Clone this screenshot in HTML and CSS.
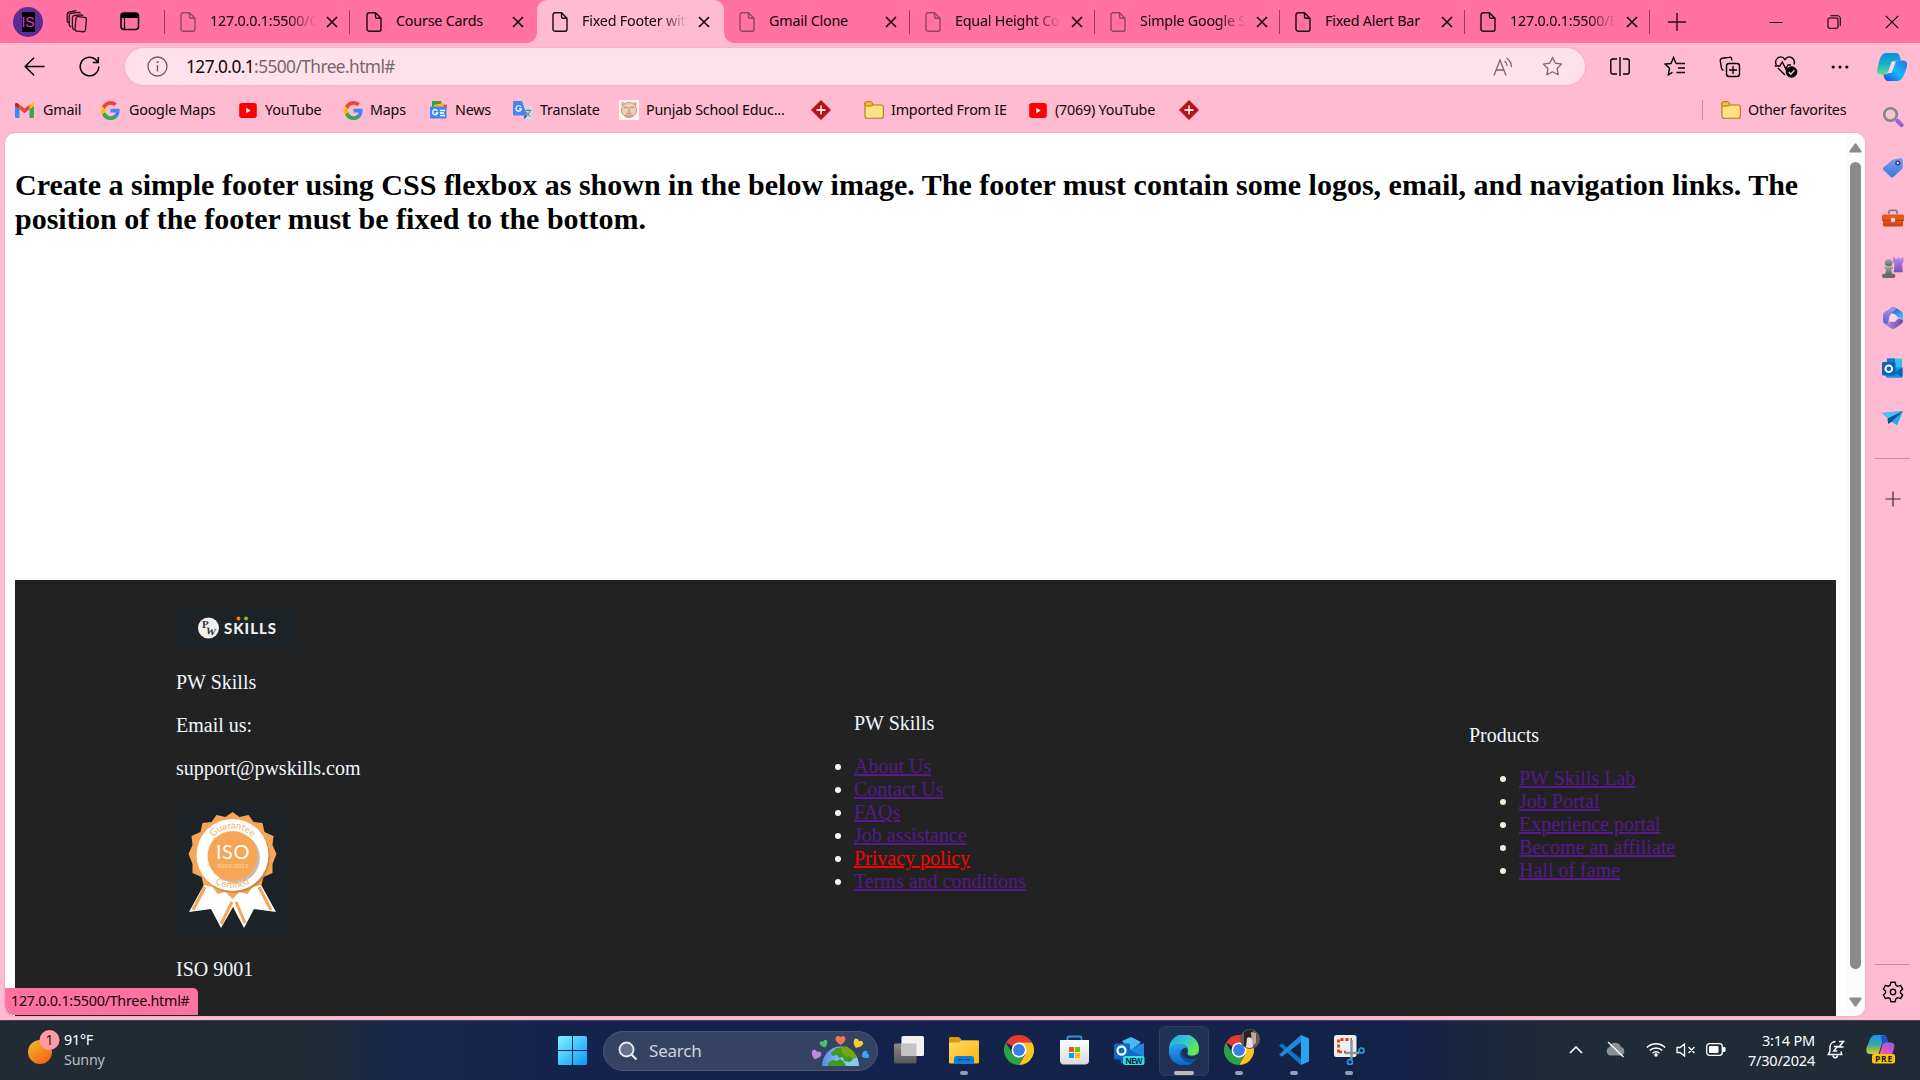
FILE: index.html
```html
<!DOCTYPE html>
<html lang="en">
<head>
<meta charset="utf-8">
<title>Fixed Footer with Flexbox</title>
<link rel="stylesheet" href="styles.css">
</head>
<body>
<svg class="defs" width="0" height="0">
  <defs>
    <linearGradient id="gWin" x1="0" y1="0" x2="1" y2="1"><stop offset="0" stop-color="#7df3ff"/><stop offset="1" stop-color="#0a96ff"/></linearGradient>
    <linearGradient id="gSun" x1="0" y1="0" x2=".7" y2="1"><stop offset="0" stop-color="#f2bd34"/><stop offset="1" stop-color="#f4650f"/></linearGradient>
    <linearGradient id="gCpA" x1="0" y1="0" x2="0" y2="1"><stop offset="0" stop-color="#0d8fe0"/><stop offset=".5" stop-color="#12b0cc"/><stop offset="1" stop-color="#63dc92"/></linearGradient>
    <linearGradient id="gCpB" x1="0" y1="1" x2="1" y2="0"><stop offset="0" stop-color="#0b4fe0"/><stop offset=".5" stop-color="#18b6fb"/><stop offset="1" stop-color="#2b6fe8"/></linearGradient>
    <linearGradient id="gPreA" x1="0" y1="0" x2="0" y2="1"><stop offset="0" stop-color="#1a8ff0"/><stop offset=".5" stop-color="#35a9a0"/><stop offset="1" stop-color="#e2c928"/></linearGradient>
    <linearGradient id="gPreB" x1="1" y1="0" x2="0" y2="1"><stop offset="0" stop-color="#8b5cf2"/><stop offset=".6" stop-color="#e256b5"/><stop offset="1" stop-color="#ff8a60"/></linearGradient>
    <linearGradient id="gTag" x1="0" y1="0" x2="0" y2="1"><stop offset="0" stop-color="#6f9ff0"/><stop offset="1" stop-color="#3f78d8"/></linearGradient>
    <linearGradient id="gBox" x1="0" y1="0" x2="0" y2="1"><stop offset="0" stop-color="#f0662a"/><stop offset="1" stop-color="#c8400c"/></linearGradient>
    <linearGradient id="gRook" x1="0" y1="0" x2="0" y2="1"><stop offset="0" stop-color="#b98af0"/><stop offset="1" stop-color="#7a52b8"/></linearGradient>
    <linearGradient id="gPawn" x1="0" y1="0" x2="0" y2="1"><stop offset="0" stop-color="#aaa"/><stop offset="1" stop-color="#666"/></linearGradient>
    <linearGradient id="gM1" x1="0" y1="0" x2="1" y2="1"><stop offset="0" stop-color="#2340b8"/><stop offset="1" stop-color="#4ad0ff"/></linearGradient>
    <linearGradient id="gM2" x1="0" y1="0" x2="0" y2="1"><stop offset="0" stop-color="#b890e8"/><stop offset="1" stop-color="#3a62dc"/></linearGradient>
    <linearGradient id="gM3" x1="0" y1="0" x2="1" y2="0"><stop offset="0" stop-color="#b98ad8"/><stop offset="1" stop-color="#6c49ac"/></linearGradient>
    <linearGradient id="gFold" x1="0" y1="0" x2="1" y2="1"><stop offset="0" stop-color="#ffd968"/><stop offset="1" stop-color="#fbb60f"/></linearGradient>
    <linearGradient id="gEdgeT" x1="0" y1="0" x2="1" y2=".5"><stop offset="0" stop-color="#1fa9e6"/><stop offset=".6" stop-color="#35c9c9"/><stop offset="1" stop-color="#66eb4c"/></linearGradient>
    <linearGradient id="gEdgeB" x1="0" y1="0" x2="0" y2="1"><stop offset="0" stop-color="#2aa5ea"/><stop offset="1" stop-color="#0b62c4"/></linearGradient>
    <linearGradient id="gStore" x1="0" y1="0" x2="0" y2="1"><stop offset="0" stop-color="#fff"/><stop offset="1" stop-color="#d9dade"/></linearGradient>
    <linearGradient id="gTv" x1="0" y1="0" x2="0" y2="1"><stop offset="0" stop-color="#8a8a8a"/><stop offset="1" stop-color="#555"/></linearGradient>
    <linearGradient id="gEarth" x1="0" y1="0" x2="1" y2="0"><stop offset="0" stop-color="#5b86e8"/><stop offset=".5" stop-color="#7cc5ff"/><stop offset="1" stop-color="#8cc8f5"/></linearGradient>
    <symbol id="page" viewBox="0 0 16 20"><path d="M3 .8h6.500L15 6.300v10.900a2 2 0 0 1-2 2H3a2 2 0 0 1-2-2V2.800a2 2 0 0 1 2-2zM9.500.8v4a1.500 1.500 0 0 0 1.500 1.500h4" fill="none" stroke="currentColor" stroke-width="1.400"/></symbol>
    <symbol id="x" viewBox="0 0 12 12"><path d="M1 1l10 10M11 1L1 11" fill="none" stroke="currentColor" stroke-width="1.600"/></symbol>
    <symbol id="google" viewBox="0 0 18 18"><path d="M17.600 9.200c0-.6-.05-1.200-.16-1.800H9v3.500h4.800a4.100 4.100 0 0 1-1.800 2.700v2.300h2.900c1.700-1.600 2.700-3.900 2.700-6.700z" fill="#4285f4"/><path d="M9 18c2.400 0 4.500-.8 6-2.200l-2.900-2.300a5.400 5.400 0 0 1-8.100-2.800H1v2.300A9 9 0 0 0 9 18z" fill="#34a853"/><path d="M4 10.700a5.400 5.400 0 0 1 0-3.400V5H1a9 9 0 0 0 0 8z" fill="#fbbc05"/><path d="M9 3.600c1.300 0 2.500.5 3.400 1.300L15 2.300A9 9 0 0 0 1 5l3 2.300A5.400 5.400 0 0 1 9 3.600z" fill="#ea4335"/></symbol>
    <symbol id="yt" viewBox="0 0 20 17"><rect width="20" height="17" rx="3" fill="#f00"/><path d="M8 5.500v6l5-3z" fill="#fff"/></symbol>
    <symbol id="diamond" viewBox="0 0 20 20"><path d="M10 .5L19.500 10 10 19.500.5 10z" fill="#b90f17" stroke="#b90f17" stroke-linejoin="round"/><path d="M10 5.500v9M5.500 10h9" stroke="#ffdada" stroke-width="1.800"/></symbol>
    <symbol id="folder" viewBox="0 0 20 18"><path d="M1 4h16.500A1.800 1.800 0 0 1 19.300 5.800v9.500a2 2 0 0 1-2 2H3a2 2 0 0 1-2-2z" fill="#ffe085" stroke="#a87a14" stroke-width="1.100"/><path d="M.7 3.500V2.200A1.500 1.500 0 0 1 2.200.7h5L9 3 7.500 5H1.500z" fill="#f3c31d" stroke="#a87a14"/></symbol>
    <symbol id="chrome" viewBox="0 0 30 30"><path d="M15 15L2 7.500A15 15 0 0 1 28 7.500L15 8z" fill="#e33b2e"/><path d="M15 7.500h13A15 15 0 0 1 15 30l6.500-11.200z" fill="#fcc31e"/><path d="M2 7.500A15 15 0 0 0 15 30l6.500-11.200H8.500z" fill="#2da04a"/><circle cx="15" cy="15" r="7.500" fill="#fff"/><circle cx="15" cy="15" r="5.900" fill="#3a7cec"/></symbol>
    <symbol id="heart" viewBox="0 0 10 9"><path d="M5 9C2 7 0 5 0 2.700 0 0 3.600-1 5 1.600 6.400-1 10 0 10 2.700 10 5 8 7 5 9z" fill="currentColor"/></symbol>
  </defs>
</svg>

<div class="window">
  <div class="titlebar">
    <div class="title-tools">
      <span class="avatar"><span class="avatar-text">IS</span></span>
      <svg class="ws" width="22" height="25" viewBox="0 0 22 25"><g fill="none" stroke="#2b1019" stroke-width="1.300"><rect x="9.500" y="8" width="10.500" height="14.500" rx="2" transform="rotate(5 15 15)"/><path d="M8.500 21l-1.200-.8a2 2 0 0 1-.9-2V8.500a2 2 0 0 1 2-2l7-.6a2 2 0 0 1 1.600 1.200M5 18l-1-.8a2 2 0 0 1-.8-2V6.500a2 2 0 0 1 1.500-2.100l8-1.100a1.800 1.800 0 0 1 1.700 1.200M2.500 14l-.7-.7a2 2 0 0 1-.6-1.500V6a3 3 0 0 1 2.200-3l7-1.400"/></g></svg>
      <svg class="va" width="20" height="19" viewBox="0 0 20 19"><rect x="1" y="1" width="17.500" height="16.500" rx="3" fill="none" stroke="#000" stroke-width="1.500"/><path d="M1 6V3.500A2.500 2.500 0 0 1 3.500 1h12.500A2.500 2.500 0 0 1 18.500 3.500V6z"/><path d="M4.500 6v11" stroke="#000" stroke-width="1.200"/></svg>
    </div>
    <div class="tabs">
      <div class="tab dim"><svg class="pg"><use href="#page"/></svg><span class="tt">127.0.0.1:5500/One.html</span><svg class="cx"><use href="#x"/></svg></div>
      <div class="tab second"><svg class="pg"><use href="#page"/></svg><span class="tt full">Course Cards</span><svg class="cx"><use href="#x"/></svg></div>
      <div class="tab active"><svg class="pg"><use href="#page"/></svg><span class="tt">Fixed Footer with Flexbox</span><svg class="cx"><use href="#x"/></svg></div>
      <div class="tab dim plain"><svg class="pg"><use href="#page"/></svg><span class="tt full">Gmail Clone</span><svg class="cx"><use href="#x"/></svg></div>
      <div class="tab dim"><svg class="pg"><use href="#page"/></svg><span class="tt">Equal Height Columns</span><svg class="cx"><use href="#x"/></svg></div>
      <div class="tab dim"><svg class="pg"><use href="#page"/></svg><span class="tt">Simple Google Search</span><svg class="cx"><use href="#x"/></svg></div>
      <div class="tab"><svg class="pg"><use href="#page"/></svg><span class="tt full">Fixed Alert Bar</span><svg class="cx"><use href="#x"/></svg></div>
      <div class="tab last"><svg class="pg"><use href="#page"/></svg><span class="tt">127.0.0.1:5500/Eight.html</span><svg class="cx"><use href="#x"/></svg></div>
    </div>
    <svg class="newtab" width="18" height="18" viewBox="0 0 18 18"><path d="M9 0v18M0 9h18" stroke="#2a0d18" stroke-width="1.400"/></svg>
    <div class="winctl">
      <svg width="14" height="14" viewBox="0 0 14 14"><path d="M.5 7.500h13" stroke="#000" stroke-width="1"/></svg>
      <svg width="14" height="14" viewBox="0 0 14 14"><g fill="none" stroke="#000" stroke-width="1.100"><rect x="1" y="3" width="10" height="10.300" rx="1.500"/><path d="M3.500.8H10.500a2.800 2.800 0 0 1 2.800 2.800V11"/></g></svg>
      <svg width="14" height="14" viewBox="0 0 14 14"><path d="M.8.8l12.400 12.400M13.200.8L.8 13.200" stroke="#000" stroke-width="1.100"/></svg>
    </div>
  </div>

  <div class="toolbar">
    <svg class="back" width="21" height="19" viewBox="0 0 21 19"><path d="M10 .8L1.200 9.500 10 18.200M1.200 9.500H20.500" fill="none" stroke="#000" stroke-width="1.500"/></svg>
    <svg class="reload" width="21" height="21" viewBox="0 0 21 21"><path d="M19.800 10.500A9.300 9.300 0 1 1 16.500 3.400L19 6M19.300 1v5.500h-5.500" fill="none" stroke="#000" stroke-width="1.500"/></svg>
    <div class="address">
      <svg class="info" width="21" height="21" viewBox="0 0 21 21"><circle cx="10.500" cy="10.500" r="9.500" fill="none" stroke="#6c5f64" stroke-width="1.300"/><path d="M10.500 9v6.500" stroke="#6c5f64" stroke-width="1.400"/><circle cx="10.500" cy="6" r="1.100" fill="#6c5f64"/></svg>
      <span class="url"><b>127.0.0.1</b>:5500/Three.html#</span>
      <svg class="read" width="20" height="20" viewBox="0 0 20 20"><path d="M1 18.500L7 3l6 15.500M3.200 13h7.600M11.500 4q2.500 2 2.500 5M13.500 1q5 3.500 5 9" fill="none" stroke="#77666c" stroke-width="1.300"/></svg>
      <svg class="star" width="21" height="21" viewBox="0 0 21 21"><path d="M10.500 1.500l2.800 5.700 6.300.9-4.500 4.400 1 6.300-5.600-3-5.600 3 1-6.300L1.400 8.100l6.300-.9z" fill="none" stroke="#77666c" stroke-width="1.300" stroke-linejoin="round"/></svg>
    </div>
    <div class="tool-icons">
      <svg width="22" height="22" viewBox="0 0 22 22"><path d="M8 3H3.500A1.700 1.700 0 0 0 1.800 4.700v11.600A1.700 1.700 0 0 0 3.500 18H8M14 3h4.500a1.700 1.700 0 0 1 1.700 1.700v11.600a1.700 1.700 0 0 1-1.700 1.700H14M11 1v19" fill="none" stroke="#000" stroke-width="1.400"/></svg>
      <svg width="22" height="22" viewBox="0 0 22 22"><path d="M12 7.500L9.500 1.500 7 7.500l-5.800.6 4.300 4.200-1.200 6.500 4.200-2.500M12 7.500h9M14 12h7M12.500 16.500H21" fill="none" stroke="#000" stroke-width="1.400"/></svg>
      <svg width="22" height="22" viewBox="0 0 22 22"><path d="M4.500 14.500L3.500 13.800a2.500 2.500 0 0 1-1-1.500L1.300 5a2.300 2.300 0 0 1 2-2.700L10 1.200a2.300 2.300 0 0 1 2.700 1.800l.3 1.500" fill="none" stroke="#000" stroke-width="1.400"/><rect x="7.500" y="7.500" width="13" height="13" rx="2.500" fill="none" stroke="#000" stroke-width="1.400"/><path d="M14 10v8M10 14h8" stroke="#000" stroke-width="1.300"/></svg>
      <svg width="24" height="24" viewBox="0 0 24 24"><path d="M2.300 10C-.5 3.500 7-1 11 4.500 15-1 22 3.500 20 9.500M4 13l7 7M.8 11h5l2.500-4 3.500 7 2.200-4H17" fill="none" stroke="#000" stroke-width="1.400"/><circle cx="17.500" cy="17" r="5.800"/><path d="M14.800 17l2 2.200 3.700-4" fill="none" stroke="#fbd" stroke-width="1.500"/></svg>
      <svg width="18" height="6" viewBox="0 0 18 6"><circle cx="2.200" cy="3" r="1.600"/><circle cx="9" cy="3" r="1.600"/><circle cx="15.800" cy="3" r="1.600"/></svg>
    </div>
    <svg class="copilot" width="30" height="28" viewBox="0 0 30 28"><path d="M19 0q3 0 4 4l1 3.500h-5q-3 0-4 3l-3 9q-1 2-4 2H3Q0 21.500 0 17l2.500-10Q4.500 0 9 0z" fill="url(#gCpA)"/><path d="M11 28q-3-.3-4-4l-.8-2.500H8q3 0 4-2.500l3.500-8.500q1-3 4-3h6.500Q31.500 8 29.800 14l-2.500 7Q25 28 20 28z" fill="url(#gCpB)"/><path d="M14.500 8.500h4.500l-4.500 11.500h-5q1.500-.5 2.200-2.500z" fill="#ffd3e2"/></svg>
  </div>

  <div class="middle">
    <div class="main">
      <div class="bookmarks">
        <div class="bm wide"><svg width="19" height="15" viewBox="0 0 19 15"><path d="M0 3v10.500A1.300 1.300 0 0 0 1.300 15H4.500V6z" fill="#4285f4"/><path d="M19 3v10.500a1.300 1.300 0 0 1-1.300 1.500h-3.200V6z" fill="#34a853"/><path d="M19 3V1.500C19 0 17.300-.3 16.300.5l-1.800 1.300v4.500L19 3z" fill="#fbbc04"/><path d="M0 3V1.500C0 0 1.700-.3 2.700.5l1.800 1.300v4.500z" fill="#c5221f"/><path d="M4.500 1.800l5 3.700 5-3.700v4.500l-5 3.900-5-3.900z" fill="#ea4335"/></svg><span>Gmail</span></div>
        <div class="bm wide"><svg width="19" height="19"><use href="#google"/></svg><span>Google Maps</span></div>
        <div class="bm"><svg width="20" height="15"><use href="#yt"/></svg><span>YouTube</span></div>
        <div class="bm"><svg width="19" height="19"><use href="#google"/></svg><span>Maps</span></div>
        <div class="bm"><svg width="19" height="18" viewBox="0 0 19 18"><path d="M3 0h9l2 6H3z" fill="#2ca24c"/><path d="M8 2l10 2-1.500 8H8z" fill="#e8412f"/><path d="M5 4l9-2 2 6H5z" fill="#fbbc04"/><rect x="1" y="5.500" width="16.500" height="12" rx="1" fill="#4285f4"/><path d="M8.500 9.800a2.600 2.600 0 1 0 .2 2.200H6.500M11 9.500h5M11 12h4M11 14.500h5" fill="none" stroke="#fff" stroke-width="1.300"/></svg><span>News</span></div>
        <div class="bm"><svg width="20" height="19" viewBox="0 0 20 19"><path d="M9 5h9.500A1.200 1.200 0 0 1 19.700 6.200v11a1.200 1.200 0 0 1-1.200 1.300H12z" fill="#d5dbe3"/><path d="M12 9.500h6.500M15 8v1.500m2 0q-.8 4-4 6m.3-4.500q1.500 3 4.200 4.500" stroke="#607d8b" fill="none"/><path d="M1.200 0H9l5 14.500H1.200A1.200 1.200 0 0 1 0 13.300V1.200A1.200 1.200 0 0 1 1.200 0z" fill="#4285f4"/><path d="M11 14.500h3l-2.500 4z" fill="#1a56c4"/><path d="M8 6a2.700 2.700 0 1 0 .4 1.900H6" fill="none" stroke="#fff" stroke-width="1.200"/></svg><span>Translate</span></div>
        <div class="bm"><svg width="20" height="20" viewBox="0 0 20 20"><rect width="20" height="20" fill="#fff6ee"/><circle cx="10" cy="10" r="7.500" fill="#f0cdba" stroke="#c99680"/><circle cx="4" cy="4" r="2" fill="#dcae98"/><circle cx="16" cy="4" r="2" fill="#dcae98"/><path d="M5 8q2-2 4 0M11 8q2-2 4 0M7.500 13q2.500 2.500 5 0M10 8v5M6 15q4 3 8 0" fill="none" stroke="#b07a64" stroke-width=".9"/></svg><span>Punjab School Educ...</span></div>
        <div class="bm"><svg width="20" height="20"><use href="#diamond"/></svg></div>
        <div class="bm"><svg width="20" height="18"><use href="#folder"/></svg><span>Imported From IE</span></div>
        <div class="bm"><svg width="20" height="15"><use href="#yt"/></svg><span>(7069) YouTube</span></div>
        <div class="bm"><svg width="20" height="20"><use href="#diamond"/></svg></div>
        <div class="bm other"><svg width="20" height="18"><use href="#folder"/></svg><span>Other favorites</span></div>
      </div>

      <div class="viewport">
        <div class="page">
          <h2>Create a simple footer using CSS flexbox as shown in the below image. The footer must contain some logos, email, and navigation links. The<br>position of the footer must be fixed to the bottom.</h2>
          <footer class="footer">
            <div class="col brand">
              <svg class="logo" width="120" height="46" viewBox="0 0 120 46"><rect width="120" height="46" fill="#1c2226"/><circle cx="32.500" cy="23" r="10.500" fill="#f2f2f2"/><text x="26" y="22.500" class="lg-p">P</text><text x="30" y="29" class="lg-w" transform="rotate(14 32 26)">W</text><text x="48" y="28.500" class="lg-s" textLength="53" lengthAdjust="spacingAndGlyphs">SKILLS</text><circle cx="62.500" cy="13.500" r="1.900" fill="#ee7f1d"/><circle cx="70" cy="13.500" r="1.900" fill="#86c440"/></svg>
              <p>PW Skills</p>
              <p>Email us:</p>
              <p>support@pwskills.com</p>
              <svg class="iso" width="114" height="135" viewBox="0 0 114 135">
                <defs><path id="arcT" d="M30 52a26.500 26.500 0 0 1 53 0"/><path id="arcB" d="M23.500 52a33 33 0 0 0 66 0"/></defs>
                <rect width="114" height="135" fill="#1c2226"/>
                <path d="M30 78L13 109l22-3 10 19 12-21 11 21 10-19 22 3-17-31z" fill="#fff"/>
                <path d="M29 84L17 107M83 84l12 23M56 99L45 121M60 99l9 21" stroke="#f6a655" stroke-width="3"/>
                <path d="M56.500 9l7 5 9-2 5 7 9 1 2 9 9 4-1 9 4 9-4 10 0 9-9 4-2 8-9 2-5 7-8-2-7 7-7-7-8 2-5-7-9-2-2-8-9-4 0-9-4-10 4-9-1-9 9-4 2-9 9-1 5-7 9 2z" fill="#f6a655"/>
                <circle cx="58" cy="54" r="36" fill="#ba7a3c" opacity=".65"/>
                <circle cx="56.500" cy="52" r="36" fill="#fff"/>
                <circle cx="59" cy="55" r="25" fill="#c5bdb5"/>
                <circle cx="56.500" cy="53" r="25" fill="#f6a655"/>
                <text class="iso-a"><textPath href="#arcT" startOffset="50%" text-anchor="middle">Guarantee</textPath></text>
                <text class="iso-a"><textPath href="#arcB" startOffset="50%" text-anchor="middle">Certified</textPath></text>
                <text x="57" y="56" class="iso-t" text-anchor="middle">ISO</text>
                <text x="57" y="64.500" class="iso-n" text-anchor="middle">9001:2015</text>
              </svg>
              <p>ISO 9001</p>
            </div>
            <div class="col links">
              <p>PW Skills</p>
              <ul>
                <li><a href="#">About Us</a></li>
                <li><a href="#">Contact Us</a></li>
                <li><a href="#">FAQs</a></li>
                <li><a href="#">Job assistance</a></li>
                <li><a href="#" class="hot">Privacy policy</a></li>
                <li><a href="#">Terms and conditions</a></li>
              </ul>
            </div>
            <div class="col products">
              <p>Products</p>
              <ul>
                <li><a href="#">PW Skills Lab</a></li>
                <li><a href="#">Job Portal</a></li>
                <li><a href="#">Experience portal</a></li>
                <li><a href="#">Become an affiliate</a></li>
                <li><a href="#">Hall of fame</a></li>
              </ul>
            </div>
          </footer>
        </div>
        <div class="scroll">
          <svg width="13" height="10" viewBox="0 0 13 10"><path d="M5.500 1q1-1.500 2 0l5 7q.5 1.500-1 1.500h-10Q0 9.500.5 8z" fill="#8b8b8b"/></svg>
          <div class="thumb"></div>
          <svg width="13" height="10" viewBox="0 0 13 10"><path d="M5.500 9q1 1.500 2 0l5-7Q13 .5 11.500.5h-10Q0 .5.500 2z" fill="#8b8b8b"/></svg>
        </div>
        <div class="status">127.0.0.1:5500/Three.html#</div>
      </div>
    </div>

    <div class="sidebar">
      <svg width="22" height="22" viewBox="0 0 22 22"><circle cx="8.500" cy="8.500" r="6.300" fill="#f6c6d6" stroke="#858585" stroke-width="2.600"/><path d="M15.500 15l4 4" stroke="#9467d8" stroke-width="4.200" stroke-linecap="round"/></svg>
      <svg class="tag" width="22" height="22" viewBox="0 0 22 22"><path d="M11 2.500l7.500-1.300a2 2 0 0 1 2.300 2V10a3 3 0 0 1-.8 2L11.500 20a2 2 0 0 1-2.800 0L1.500 13a2 2 0 0 1 0-2.800z" fill="url(#gTag)"/><circle cx="15.800" cy="6" r="1.900" fill="#f5c3dc" stroke="#34379b" stroke-width="1.400"/></svg>
      <svg width="22" height="22" viewBox="0 0 22 22"><path d="M7 7V4.500A1.200 1.200 0 0 1 8.200 3.300h5.600A1.200 1.200 0 0 1 15 4.500V7" fill="none" stroke="#7e7e7e" stroke-width="1.700"/><rect x="1" y="9" width="20" height="10.500" rx="1.500" fill="url(#gBox)"/><rect y="7.500" width="22" height="6.500" rx="1.500" fill="#e8571d"/><path d="M0 12.800h22v1H0z" fill="#ae3508"/><circle cx="11" cy="13" r="2.300" fill="#dcdcdc"/></svg>
      <svg width="23" height="23" viewBox="0 0 23 23"><path d="M12 .5h2.500V2h2V.5h2.500V2h1.500V.5H23v5l-1.500 1.500.8 9H12.800l.8-9L12 5.500z" fill="url(#gRook)"/><circle cx="7.500" cy="6" r="4" fill="url(#gPawn)"/><path d="M3 10h9v2.200l-1.700.8.7 5H4l.7-5L3 12.200z" fill="url(#gPawn)"/><rect x=".5" y="17.500" width="14" height="4.500" rx="2.200" fill="#696969"/></svg>
      <svg width="22" height="22" viewBox="0 0 22 22"><path d="M8.500 1.200Q11-.5 14 1l5 3q2 1.200 2 3.500V13l-6-3.500Q14.500 7.500 12 7L6.500 4.500z" fill="url(#gM1)"/><path d="M9.500.8L3 4.800Q1 6 1 8.300v5.200Q1 15.800 3 17l3.500 2Q6 12 8 8.500q1.500-3 5-5L14 .8Q11-.5 9.500.8z" fill="url(#gM2)"/><path d="M3 16.500q3 .5 6-2l3.500.5 4.500-3.500 4 1.500v1q0 2-2 3.200L13 21.200q-2 1-4 0L4 18z" fill="url(#gM3)"/><circle cx="11" cy="11" r="3.700" fill="#ffd9e6"/></svg>
      <svg width="21" height="21" viewBox="0 0 21 21"><rect x="5" y="1" width="15" height="12" rx="1" fill="#33bdf2"/><path d="M5 1h8v6H5z" fill="#0d7cd5"/><path d="M4 10h16.500v9a1.200 1.200 0 0 1-1.200 1.200H5.200A1.200 1.200 0 0 1 4 19z" fill="#1591dd"/><path d="M12 15l8.500-5v9.500z" fill="#0764b5"/><rect y="4.500" width="13.500" height="13.500" rx="1.500" fill="#0a63b9"/><circle cx="6.800" cy="11.200" r="3.300" fill="none" stroke="#fff" stroke-width="2"/></svg>
      <svg width="22" height="22" viewBox="0 0 22 22"><path d="M0 6l21-2-6 14.500-5-3.500z" fill="#28a9ea"/><path d="M0 6l21-2L7 12z" fill="#41c4f5"/><path d="M21 4L5.500 11.500l.7 5.500 3.500-2.200z" fill="#0c4f94"/></svg>
      <i class="rule top"></i>
      <svg class="plus" width="16" height="16" viewBox="0 0 16 16"><path d="M8 .5v15M.5 8h15" stroke="#3b2a30" stroke-width="1.200"/></svg>
      <i class="rule bottom"></i>
      <svg class="gear" width="22" height="22" viewBox="0 0 22 22"><path d="M8.800 1.300h4.400l.6 2.900 1.900 1.100 2.800-1 2.200 3.800-2.200 2v1.800l2.200 2-2.200 3.800-2.800-1-1.900 1.100-.6 2.900H8.800l-.6-2.900-1.900-1.100-2.800 1-2.200-3.800 2.200-2v-1.800l-2.200-2 2.200-3.800 2.800 1 1.900-1.100z" fill="none" stroke="#000" stroke-width="1.400" stroke-linejoin="round"/><circle cx="11" cy="11" r="2.700" fill="none" stroke="#000" stroke-width="1.400"/></svg>
    </div>
  </div>
</div>

<div class="taskbar">
  <div class="weather">
    <svg width="34" height="38" viewBox="0 0 34 38"><circle cx="13" cy="23" r="12" fill="url(#gSun)"/><circle cx="22.500" cy="11" r="10" fill="#ff9aa5"/><text x="22.500" y="16" text-anchor="middle" class="badge-n">1</text></svg>
    <div class="wtext"><span>91°F</span><span class="muted">Sunny</span></div>
  </div>
  <svg class="win" width="29" height="29" viewBox="0 0 29 29"><path d="M0 1.500A1.500 1.500 0 0 1 1.500 0H14v14H0zM15 0h12.500A1.500 1.500 0 0 1 29 1.500V14H15zM0 15h14v14H1.500A1.500 1.500 0 0 1 0 27.500zM15 15h14v12.500a1.500 1.500 0 0 1-1.500 1.500H15z" fill="url(#gWin)"/></svg>
  <div class="search">
    <svg width="20" height="20" viewBox="0 0 20 20"><circle cx="8.500" cy="8.500" r="7" fill="#65718c" stroke="#e8eaf0" stroke-width="1.800"/><path d="M13.500 13.500l5 5" stroke="#e8eaf0" stroke-width="2.200"/></svg>
    <span>Search</span>
    <svg class="earth" width="58" height="32" viewBox="0 0 58 32">
      <path d="M11 31a18.500 19.500 0 0 1 37 0z" fill="url(#gEarth)"/>
      <path d="M17 31v-3l4-3 5 1 3-2 4 3 2 4zM20 18l5-5 10-1.500L42 16l4 6-4 2-3 3-6-1-1-4-4 1-2-3-5 1z" fill="#3f9a22"/>
      <path d="M30 12l6-.5 6 4.500 4 6-4 2-4-3-3 1-4-4z" fill="#7ba510"/>
      <use href="#heart" x="24" y="1" width="11" height="9" color="#f9725a"/>
      <use href="#heart" x="9" y="5" width="8" height="8" color="#43c768" transform="rotate(-20 13 9)"/>
      <use href="#heart" x="42" y="4" width="10" height="9" color="#fbc935" transform="rotate(25 46 8)"/>
      <use href="#heart" x="0" y="15" width="10" height="10" color="#bd8ae6" transform="rotate(20 5 20)"/>
      <use href="#heart" x="50" y="16" width="8" height="8" color="#36a9ef" transform="rotate(60 54 20)"/>
    </svg>
  </div>
  <div class="apps">
    <div class="app"><svg width="30" height="28" viewBox="0 0 30 28"><rect x="0" y="7.500" width="22.500" height="20" rx="1.500" fill="url(#gTv)"/><rect x="7.500" width="22.500" height="20" rx="1.500" fill="#f2f2f2"/><path d="M7.500 7.500h15V20h-15z" fill="#c3c3c3"/></svg></div>
    <div class="app run"><svg width="30" height="27" viewBox="0 0 30 27"><path d="M0 1.500A1.500 1.500 0 0 1 1.500 0H10l3 3.500h15.500A1.500 1.500 0 0 1 30 5v8H0z" fill="#dc9a0a"/><path d="M0 5.500h10l2.500-2H30V25a1.500 1.500 0 0 1-1.500 1.500h-27A1.500 1.500 0 0 1 0 25z" fill="url(#gFold)"/><path d="M5 27v-5.500a2.500 2.500 0 0 1 2.500-2.500h15a2.500 2.500 0 0 1 2.500 2.500V27z" fill="#0f7fd3"/><path d="M8.500 22.700h13" stroke="#0b4a91" stroke-width="1.300"/></svg></div>
    <div class="app"><svg width="30" height="30"><use href="#chrome"/></svg></div>
    <div class="app"><svg width="29" height="30" viewBox="0 0 29 30"><path d="M7.500 6V3a1.500 1.500 0 0 1 1.500-1.500h11A1.500 1.500 0 0 1 21.500 3v3" fill="none" stroke="#1d9fe2" stroke-width="1.800"/><path d="M0 5h29v20.500a4 4 0 0 1-4 4H4a4 4 0 0 1-4-4z" fill="url(#gStore)"/><path d="M9 12h5v5H9z" fill="#f25022"/><path d="M15 12h5v5h-5z" fill="#7fba00"/><path d="M9 18h5v5H9z" fill="#00a4ef"/><path d="M15 18h5v5h-5z" fill="#ffb900"/></svg></div>
    <div class="app"><svg width="31" height="30" viewBox="0 0 31 30"><path d="M5 11L17 3l13 8v12l-13 5H7z" fill="#1368c8"/><path d="M8 6l9-4 10 5-10 8z" fill="#49b7f2"/><path d="M16 15l14-7v14z" fill="#2387de"/><rect y="8.500" width="16" height="16" rx="1.500" fill="#0b68c7"/><circle cx="7.500" cy="15.500" r="4" fill="none" stroke="#fff" stroke-width="2.300"/><rect x="9" y="21" width="21.500" height="9" rx="2" fill="#35dfe9"/><text x="19.800" y="28.600" class="new" text-anchor="middle" textLength="17">NEW</text></svg></div>
    <div class="app run current"><svg width="30" height="30" viewBox="0 0 30 30"><circle cx="15" cy="15" r="15" fill="#0b5fb8"/><path d="M0 14A15 15 0 0 1 30 14q0 6-6.500 6.500-5.500 0-5-2.500 1-1.500.5-4-1-4-7-4.500Q5 9.500 0 14z" fill="url(#gEdgeT)"/><path d="M0 14q3-5.500 10-5 6.500.5 8.500 5.500-5-2.500-7 1.500-2 6 4 9.500 3.500 2 8 2.500A15 15 0 0 1 0 14z" fill="url(#gEdgeB)"/><path d="M17.500 13q-4-.5-5 3.500 0 5.500 6 7.500 5 1.200 9.500-1l2.500-3.500h-2.500q-3 2.300-7 1.800-3.600-.5-2.500-3 .5-2-1-5.300z" fill="#1f2d55"/><path d="M11.500 16q-1.500 6 5 10.500 4 1.500 7.500.5 3-1.500 5-4.500-8 3.500-14-1-3-2.500-3.500-5.500z" fill="#124d97"/></svg></div>
    <div class="app run"><svg class="profiled" width="36" height="36" viewBox="0 0 36 36"><use href="#chrome" x="0" y="6" width="30" height="30"/><circle cx="26" cy="10" r="10" fill="#6a5752"/><path d="M20 3q4-3 9-2l-3 17-6-1z" fill="#2b2220"/><path d="M27 3l5 1v10l-4 3z" fill="#b9a9a4"/><path d="M23 9q3-2 5 1l1 8q-4 2-7 0z" fill="#ecdcd8"/></svg></div>
    <div class="app run"><svg width="30" height="30" viewBox="0 0 30 30"><path d="M0 10.500l3-2.300L22 24v6z" fill="#0e76c0"/><path d="M0 19.500l3 2.300L22 7V0z" fill="#1c8ad6"/><path d="M22 0l8 3.500v23L22 30z" fill="#2ba3ee"/></svg></div>
    <div class="app run"><svg width="31" height="30" viewBox="0 0 31 30"><rect width="22.500" height="22" rx="2.500" fill="#eceef1"/><path d="M4.500 17.500v-13h13.500" fill="none" stroke="#d8420c" stroke-width="2.800" stroke-dasharray="3 2"/><path d="M5 17h7" stroke="#d8420c" stroke-width="2.600" stroke-dasharray="3 2"/><path d="M17.500 5v19M11 18h14" stroke="#8d939a" stroke-width="2.400"/><circle cx="27.500" cy="15.500" r="2.500" fill="none" stroke="#2b9be2" stroke-width="1.700"/><circle cx="16" cy="27" r="2.500" fill="none" stroke="#2b9be2" stroke-width="1.700"/></svg></div>
  </div>
  <div class="tray">
    <svg class="chev" width="14" height="8" viewBox="0 0 14 8"><path d="M1 7l6-6 6 6" fill="none" stroke="#fff" stroke-width="1.700"/></svg>
    <svg class="cloud" width="21" height="17" viewBox="0 0 21 17"><path d="M5 14.500a4.500 4.500 0 0 1-.5-8.500A6 6 0 0 1 16 6a4.500 4.500 0 0 1 .5 8.500z" fill="#8a9094"/><path d="M3 1l15.500 15" stroke="#fff" stroke-width="1.300"/></svg>
    <svg class="wifi" width="20" height="15" viewBox="0 0 20 15"><path d="M.8 5.500a13 13 0 0 1 18.400 0M3.700 8.500a9 9 0 0 1 12.600 0M6.500 11.300a5 5 0 0 1 7 0" fill="none" stroke="#fff" stroke-width="1.500"/><circle cx="10" cy="13" r="1.700" fill="#fff"/></svg>
    <svg class="mute" width="20" height="14" viewBox="0 0 20 14"><path d="M1 4.500h3L8.500 1v12L4 9.500H1zM12.500 4l6 6M18.500 4l-6 6" fill="none" stroke="#fff" stroke-width="1.300"/></svg>
    <svg class="batt" width="20" height="13" viewBox="0 0 20 13"><rect x=".7" y=".7" width="15.600" height="11.600" rx="2.800" fill="none" stroke="#fff" stroke-width="1.300"/><rect x="3" y="3" width="9.500" height="7" rx="1" fill="#fff"/><path d="M17 4h1.200q1.300 0 1.300 1.300v2.400q0 1.300-1.300 1.300H17z" fill="#fff"/></svg>
    <div class="clock"><span>3:14 PM</span><span>7/30/2024</span></div>
    <svg class="bell" width="18" height="19" viewBox="0 0 18 19"><path d="M8.500 1.500A5.800 5.800 0 0 0 3 7v4L1.300 14.500h13.400l-.7-3M6 15.500a2.200 2.200 0 0 0 4.400 0M6.800 6.500h3.500l-3.500 4.500h3.500M12 1.500h4.500L12 7h4.500" fill="none" stroke="#fff" stroke-width="1.500"/></svg>
    <svg class="pre" width="30" height="30" viewBox="0 0 30 30"><path d="M17 0q3.500 0 4 4l1 3q-5-1-6.500 3L12.500 19H4Q-.5 19 .5 13L4 4Q6 0 9 0z" fill="url(#gPreA)"/><path d="M15 1q4-2 6 2l1.500 5Q18 7 16.500 11z" fill="#1954d2"/><path d="M12.500 22l4-12q1-2.500 4-2.500H25q4.500.5 3 6l-3 8.500z" fill="url(#gPreB)"/><rect x="6" y="19" width="23" height="9.500" rx="2" fill="#fdc30f"/><text x="17.500" y="27" class="pre-t" text-anchor="middle" textLength="17">PRE</text></svg>
  </div>
</div>
</body>
</html>
```

FILE: styles.css
```css
* { box-sizing: border-box; }
body {
  margin: 0;
  width: 1920px;
  height: 1080px;
  overflow: hidden;
  display: flex;
  flex-direction: column;
  background: #ffbbd1;
  font-family: "Noto Sans", "Open Sans", sans-serif;
  font-size: 14.3px;
  letter-spacing: -0.2px;
  color: #100508;
}
svg { display: block; flex: none; }
.defs { position: absolute; }

.window { height: 1020px; display: flex; flex-direction: column; }

/* tab strip */
.titlebar { height: 43px; flex: none; display: flex; align-items: center; background: #ff72a2; }
.title-tools { width: 164px; display: flex; align-items: center; padding-left: 13px; }
.avatar { width: 30px; height: 30px; border-radius: 50%; background: #5a2d91; display: flex; align-items: center; justify-content: center; }
.avatar-text { width: 13px; height: 20px; background: #080208; color: #d63fd0; font: 14px/20px "Liberation Sans", sans-serif; display: flex; justify-content: center; }
.ws { margin-left: 23px; }
.va { margin-left: 32px; }
.tabs { display: flex; height: 43px; }
.tab { position: relative; width: 185px; height: 43px; padding-left: 16px; display: flex; align-items: center; }
.tab::before { content: ""; position: absolute; left: 0; top: 10px; height: 24px; width: 1px; background: #93405c; }
.tab.last::after { content: ""; position: absolute; right: 0; top: 10px; height: 24px; width: 1px; background: #93405c; }
.tab.second { width: 188px; padding-left: 17px; }
.tab.last { width: 186px; }
.tab.active { width: 187px; padding-left: 15px; background: #ffbbd1; border-radius: 10px 10px 0 0; }
.tab.active::before { width: 10px; height: 10px; left: -10px; top: 33px; background: radial-gradient(circle at 0 0, #ff72a2 9.5px, #ffbbd1 10px); }
.tab.active::after { content: ""; position: absolute; width: 10px; height: 10px; right: -10px; top: 33px; background: radial-gradient(circle at 10px 0, #ff72a2 9.5px, #ffbbd1 10px); }
.tab.plain { padding-left: 15px; }
.tab.plain::before { display: none; }
.pg { width: 16px; height: 20px; margin-top: 1px; color: #1a0810; }
.dim .pg { color: #96435f; }
.tt { width: 106px; margin-left: 14px; margin-right: 10px; line-height: 20px; margin-top: -2px; white-space: nowrap; overflow: hidden; -webkit-mask-image: linear-gradient(90deg, #000 78px, transparent 106px); mask-image: linear-gradient(90deg, #000 78px, transparent 106px); }
.tt.full { -webkit-mask-image: none; mask-image: none; }
.cx { width: 12px; height: 12px; }
.newtab { margin-left: 18px; }
.winctl { display: flex; gap: 44px; margin-left: 83px; }

/* toolbar */
.toolbar { height: 47px; flex: none; display: flex; align-items: center; padding-left: 24px; }
.reload { margin-left: 34px; }
.address { width: 1460px; height: 37px; margin-left: 25px; display: flex; align-items: center; padding-left: 22px; background: #ffe1eb; border-radius: 19px; box-shadow: 0 0 3px #eda8bf; }
.url { margin-left: 18px; font-size: 17.3px; line-height: 24px; color: #75676c; letter-spacing: -0.57px; width: 1307px; }
.url b { font-weight: 400; color: #0d0508; }
.star { margin-left: 29px; }
.tool-icons { display: flex; align-items: center; gap: 33px; margin-left: 24px; }
.copilot { margin-left: 28px; }

.middle { display: flex; flex: 1; min-height: 0; }
.main { width: 1865px; display: flex; flex-direction: column; }

/* favourites */
.bookmarks { height: 43px; display: grid; grid-template-columns: 86px 137px 106px 85px 84px 106px 192px 53px 164px 151px 523px 160px; padding: 0 0 3px 15px; align-items: center; }
.bm { display: flex; align-items: center; gap: 7px; white-space: nowrap; line-height: 20px; }
.bm.wide { gap: 9px; }
.bm.other { border-left: 1px solid #cc8ba1; height: 20px; padding-left: 18px; }

/* page viewport */
.viewport { position: relative; width: 1860px; height: 883px; margin-left: 5px; display: flex; background: #fff; border-radius: 10px; overflow: hidden; box-shadow: 0 0 2px #d895aa; }
.page { width: 1841px; padding: 35px 10px 0; font-family: "Liberation Serif", "Times New Roman", serif; font-size: 20px; letter-spacing: 0; color: #000; }
.page h2 { height: 412px; margin: 0; font-size: 30px; line-height: 34px; white-space: nowrap; }
.footer { width: 1821px; height: 436px; background: #222; color: aliceblue; display: flex; padding-left: 161px; }
.col p { margin: 0; line-height: 23px; }
.brand { width: 678px; padding-top: 25px; }
.brand p { margin-top: 20px; }
.brand .iso { margin-top: 23px; }
.links { width: 615px; padding-top: 132px; }
.products { padding-top: 144px; }
.col ul { margin: 20px 0 0; padding: 0; }
.col li { line-height: 23px; }
.products ul { padding-left: 50px; color: antiquewhite; }
.col a { color: #551a8b; }
.col a.hot { color: #f00; }
.lg-p { font: bold 11px "Liberation Serif", serif; fill: #333; }
.lg-w { font: bold 10px "Liberation Serif", serif; fill: #333; }
.lg-s { font: 900 15px Lato, sans-serif; fill: #f2f2f2; letter-spacing: 1px; }
.iso-a { font: 9.5px Lato, sans-serif; fill: #f4ae69; }
.iso-t { font: 20px Lato, sans-serif; fill: #fff; letter-spacing: 0.5px; }
.iso-n { font: 6.5px Lato, sans-serif; fill: #fbd6ae; }

.scroll { width: 19px; padding-top: 10px; background: #fcfcfc; display: flex; flex-direction: column; align-items: center; }
.thumb { width: 11px; height: 807px; margin: 9px 0 28px; border-radius: 6px; background: #8b8b8b; }
.status { position: absolute; left: 0; bottom: 1px; width: 193px; height: 27px; padding-left: 6px; line-height: 26px; background: #ff72a2; border-radius: 0 5px 0 8px; letter-spacing: -0.25px; }

/* sidebar */
.sidebar { width: 55px; display: flex; flex-direction: column; align-items: center; padding: 16px 0 0; gap: 28px; }
.sidebar svg { height: 22px; }
.sidebar .tag { margin-top: 1px; }
.rule { width: 35px; height: 1px; background: #c392a2; }
.rule.top { margin-top: 1px; }
.sidebar .plus { height: 16px; margin-top: 4px; }
.rule.bottom { margin-top: 429px; }
.sidebar .gear { margin-top: -12px; }

/* taskbar */
.taskbar { height: 60px; flex: none; display: flex; align-items: center; border-top: 1px solid #384456; background: linear-gradient(90deg, #202b34 0, #202b34 300px, #17294a 400px, #13234c 600px, #132248 1400px, #1b293c 1500px, #202b35 1600px, #202b35 100%); color: #fff; }
.weather { width: 558px; display: flex; padding-left: 27px; align-items: center; }
.weather svg { margin-top: -6px; }
.wtext { display: flex; flex-direction: column; line-height: 20px; margin: -2px 0 0 3px; }
.muted { color: #b9bec2; }
.badge-n { font: 14px "Noto Sans", sans-serif; fill: #222; }
.search { width: 275px; height: 40px; margin-left: 16px; padding: 0 8px 0 14px; display: flex; align-items: center; background: #354363; border: 1px solid #4b5775; border-radius: 20px; font-size: 17px; color: #d0d4dc; }
.search span { margin: -1px 0 0 11px; flex: 1; }
.apps { display: flex; margin-left: 6px; gap: 5px; }
.app { position: relative; width: 50px; height: 50px; display: flex; align-items: center; justify-content: center; border-radius: 6px; }
.app svg { margin-top: -1px; }
.app .profiled { margin: -7px 0 0 6px; }
.run::after { content: ""; position: absolute; left: 21px; bottom: 1px; width: 8px; height: 4px; border-radius: 2px; background: #959db0; }
.current { background: #223056; border: 1px solid #2e3c60; }
.current::after { left: 14px; width: 20px; bottom: 0; background: #bcb9b4; }
.new { font: bold 8px "Noto Sans", sans-serif; fill: #06283a; }
.tray { display: flex; align-items: center; margin: -2px 0 0 195px; }
.cloud { margin-left: 22px; }
.wifi { margin-left: 20px; }
.mute { margin-left: 10px; }
.batt { margin-left: 10px; }
.clock { width: 89px; display: flex; flex-direction: column; align-items: flex-end; line-height: 20px; font-size: 14.5px; white-space: nowrap; }
.bell { margin-left: 12px; }
.pre { margin-left: 21px; }
.pre-t { font: bold 8.5px "Noto Sans", sans-serif; fill: #222; }
```
